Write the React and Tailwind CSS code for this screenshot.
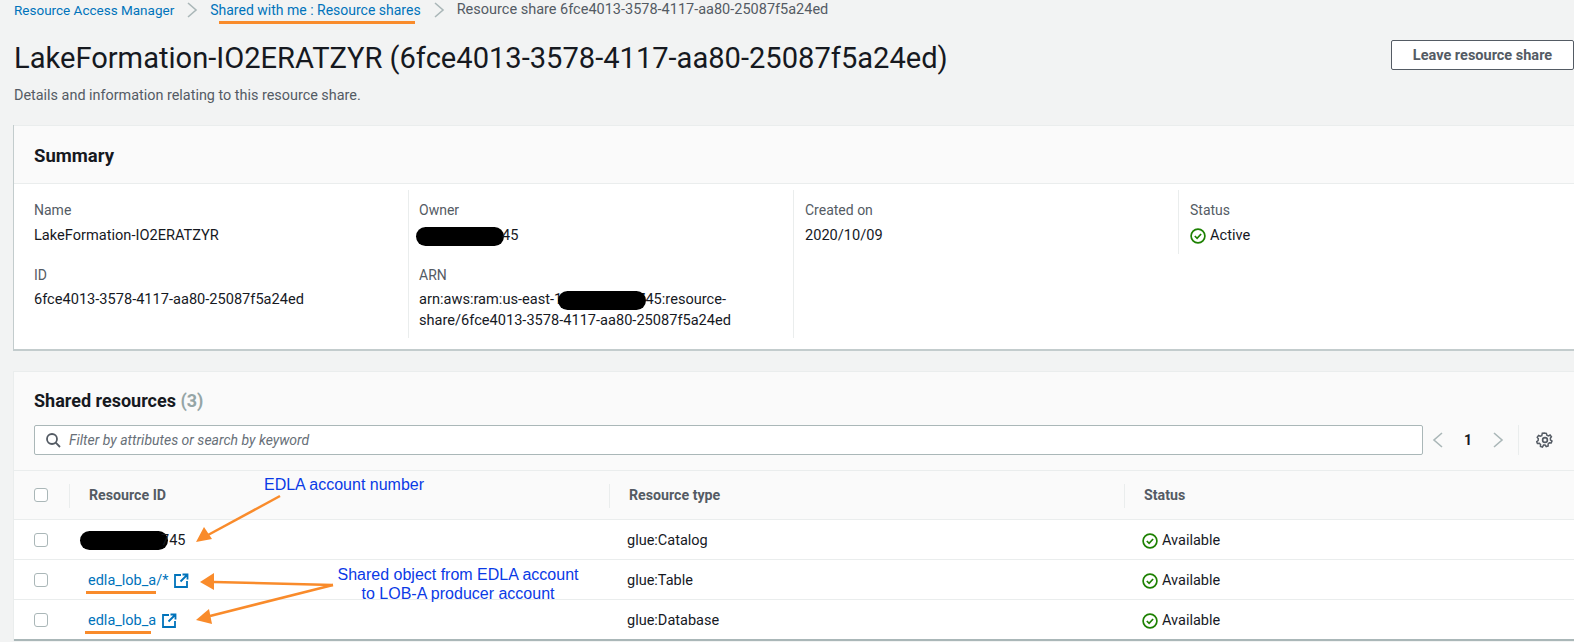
const font = { fontFamily: 'Roboto, "Noto Sans", sans-serif' };

function Chevron({ dir = 'right', className = '' }) {
  return (
    <svg width="12" height="18" viewBox="0 0 12 18" fill="none" stroke="currentColor" strokeWidth="1.6" className={className}>
      <path d={dir === 'right' ? 'M2 2l8 7-8 7' : 'M10 2L2 9l8 7'} />
    </svg>
  );
}

function StatusIcon() {
  return (
    <svg width="16" height="16" viewBox="0 0 16 16" fill="none" stroke="#1d8102" strokeWidth="1.7" className="shrink-0">
      <circle cx="8" cy="8" r="6.9" />
      <path d="M4.8 8l2.3 2.3 4-4.3" />
    </svg>
  );
}

function ExternalIcon() {
  return (
    <svg width="16" height="16" viewBox="0 0 16 16" fill="none" stroke="#0073bb" strokeWidth="1.8" className="shrink-0">
      <path d="M8 2H2v12h12V8M9.500 1.500h5v5M14 2L7.500 8.500" />
    </svg>
  );
}

function Checkbox() {
  return <span className="block h-[14px] w-[14px] rounded-[3px] border border-[#aab7b8] bg-white" />;
}

function Blob({ className = '' }) {
  return <span className={`inline-block h-[19px] w-[88px] rounded-full bg-black align-middle ${className}`} />;
}

function Field({ label, children, className = '', valueClass = 'mt-[5px]' }) {
  return (
    <div className={className}>
      <div className="text-[14px] leading-[20px] text-[#545b64]">{label}</div>
      <div className={`${valueClass} text-[14.6px] leading-[21px] text-[#16191f]`}>{children}</div>
    </div>
  );
}

const rowGrid = 'grid grid-cols-[55px_540px_515px_1fr] items-center';

function Row({ id, type, last }) {
  return (
    <div className={`${rowGrid} ${last ? 'h-[41px] border-b-2 border-[#aab7b8]' : 'h-[40px] border-b border-[#eaeded]'}`}>
      <div className="pl-[20px]"><Checkbox /></div>
      <div className="pt-[2px] pl-[19px] text-[14.5px] text-[#16191f]">{id}</div>
      <div className="pt-[2px] pl-[18px] text-[14.5px] text-[#16191f]">{type}</div>
      <div className="flex items-center gap-[4px] pt-[2px] pl-[18px] text-[14.5px] text-[#16191f]"><StatusIcon />Available</div>
    </div>
  );
}

function Head({ children }) {
  return (
    <div className="mt-[2px] flex h-[24px] items-center border-l border-[#eaeded] pl-[19px] text-[14.2px] font-bold text-[#545b64]">
      {children}
    </div>
  );
}

export default function App() {
  return (
    <div className="relative h-[642px] w-[1574px] overflow-hidden bg-[#f2f3f3]" style={font}>
      <div className="flex h-[20px] items-center pl-[14px] leading-[20px]">
        <span className="text-[13.5px] text-[#0073bb]">Resource Access Manager</span>
        <Chevron className="mx-[12px] text-[#aab7b8]" />
        <span className="text-[14px] text-[#0073bb]">Shared with me : Resource shares</span>
        <Chevron className="mx-[12px] text-[#aab7b8]" />
        <span className="text-[14.5px] text-[#545b64]">Resource share 6fce4013-3578-4117-aa80-25087f5a24ed</span>
      </div>

      <div className="mt-[20px] flex items-start justify-between pl-[14px]">
        <h1 className="text-[29.1px] leading-[36px] font-normal text-[#16191f]">LakeFormation-IO2ERATZYR (6fce4013-3578-4117-aa80-25087f5a24ed)</h1>
        <button className="h-[30px] w-[183px] rounded-[2px] border border-[#545b64] bg-white pt-[2px] text-[14.5px] font-bold text-[#545b64]">Leave resource share</button>
      </div>
      <p className="mt-[10px] pl-[14px] text-[14.4px] leading-[20px] text-[#545b64]">Details and information relating to this resource share.</p>

      <section className="mt-[19px] ml-[13px] w-[1600px] border-b-2 border-l border-[#aab7b8]/70 bg-white">
        <div className="flex h-[59px] items-center border-y border-[#eaeded] bg-[#fafafa] pt-[5px] pl-[20px]">
          <h2 className="text-[18.5px] font-bold text-[#16191f]">Summary</h2>
        </div>
        <div className="grid h-[165px] grid-cols-[394px_385px_385px_1fr] items-start pt-[6px]">
          <div className="h-[148px] pt-[10px] pl-[20px]">
            <Field label="Name">LakeFormation-IO2ERATZYR</Field>
            <Field label="ID" className="mt-[19px]" valueClass="mt-[4px]">6fce4013-3578-4117-aa80-25087f5a24ed</Field>
          </div>
          <div className="h-[148px] border-l border-[#eaeded] pt-[10px] pl-[10px]">
            <Field label="Owner"><Blob className="-mr-[2px] -ml-[3px]" />45</Field>
            <Field label="ARN" className="mt-[19px]" valueClass="mt-[4px]">
              <div className="whitespace-nowrap">arn:aws:ram:us-east-1<Blob className="relative -mr-[9px] -ml-[4px]" />745:resource-</div>
              <div className="whitespace-nowrap">share/6fce4013-3578-4117-aa80-25087f5a24ed</div>
            </Field>
          </div>
          <div className="h-[148px] border-l border-[#eaeded] pt-[10px] pl-[11px]">
            <Field label="Created on">2020/10/09</Field>
          </div>
          <div className="h-[64px] border-l border-[#eaeded] pt-[10px] pl-[11px]">
            <Field label="Status"><span className="flex items-center gap-[4px]"><StatusIcon />Active</span></Field>
          </div>
        </div>
      </section>

      <section className="mt-[20px] ml-[13px] w-[1600px] border-t border-l border-[#eaeded] bg-white">
        <div className="h-[99px] border-b border-[#eaeded] bg-[#fafafa] pt-[16px] pl-[20px]">
          <h2 className="text-[18px] leading-[26px] font-bold text-[#16191f]">Shared resources <span className="text-[#95a5a6]">(3)</span></h2>
          <div className="mt-[11px] flex items-center">
            <div className="flex h-[30px] w-[1389px] items-center gap-[8px] rounded-[2px] border border-[#aab7b8] bg-white pl-[10px]">
              <svg width="16" height="16" viewBox="0 0 16 16" fill="none" stroke="#545b64" strokeWidth="1.8"><circle cx="7" cy="7" r="5" /><path d="M10.700 10.700L15 15" /></svg>
              <span className="text-[14px] text-[#687078] italic">Filter by attributes or search by keyword</span>
            </div>
            <Chevron dir="left" className="ml-[9px] text-[#aab7b8]" />
            <span className="ml-[19px] w-[10px] text-center text-[14px] font-bold text-[#16191f]">1</span>
            <Chevron className="ml-[19px] text-[#aab7b8]" />
            <div className="ml-[14px] h-[30px] border-l border-[#eaeded]" />
            <svg width="18" height="18" viewBox="0 0 24 24" fill="none" stroke="#545b64" strokeWidth="2.200" className="ml-[17px]">
              <circle cx="12" cy="12" r="3.200" />
              <path d="M12 1.800l2 .3.8 2.700 2.200 1 2.500-1.200 2 2.600-1.600 2.200.3 2.600 2.200 1.600-1.200 2.800-2.800-.3-1.800 1.800.1 2.800-2.900 1-1.700-2.200h-2.200L8.200 22.500l-2.900-1 .1-2.800-1.800-1.800-2.800.3-1.200-2.800 2.200-1.600.3-2.600L.5 7.900l2-2.600L5 6.500l2.200-1L8 2.100z" transform="translate(1.200 1.200) scale(.9)" />
            </svg>
          </div>
        </div>
        <div className={`${rowGrid} h-[49px] border-b border-[#eaeded] bg-[#fafafa]`}>
          <div className="pl-[20px]"><Checkbox /></div>
          <Head>Resource ID</Head>
          <Head>Resource type</Head>
          <Head>Status</Head>
        </div>
        <Row id={<span className="-ml-[8px] block"><Blob className="-mr-[7px]" />745</span>} type="glue:Catalog" />
        <Row id={<span className="flex items-center gap-[5px] text-[#0073bb]">edla_lob_a/*<ExternalIcon /></span>} type="glue:Table" />
        <Row last id={<span className="flex items-center gap-[5px] text-[#0073bb]">edla_lob_a<ExternalIcon /></span>} type="glue:Database" />
      </section>

      <span className="absolute top-[21px] left-[219px] h-[3px] w-[196px] bg-[#f98b2b]" />
      <span className="absolute top-[591px] left-[86px] h-[3px] w-[70px] bg-[#f98b2b]" />
      <span className="absolute top-[631px] left-[85px] h-[3px] w-[66px] bg-[#f98b2b]" />

      <svg className="absolute top-0 left-0" width="1574" height="642" fill="none">
        <g stroke="#f98b2b" strokeWidth="2.500">
          <path d="M280 496L208 535" />
          <path d="M333 585L214 582" />
          <path d="M333 585L210 616" />
        </g>
        <g fill="#f98b2b">
          <path d="M196 542l8-15 8 12z" />
          <path d="M200 582l14-9v17z" />
          <path d="M196 620l13-11 3 15z" />
        </g>
      </svg>

      <div className="absolute top-[476px] left-[244px] w-[200px] text-center text-[16px] leading-[18px] text-[#0a3ae6]" style={{ fontFamily: '"Liberation Sans", sans-serif' }}>EDLA account number</div>
      <div className="absolute top-[565px] left-[318px] w-[280px] text-center text-[16px] leading-[19px] text-[#0a3ae6]" style={{ fontFamily: '"Liberation Sans", sans-serif' }}>Shared object from EDLA account<br />to LOB-A producer account</div>
    </div>
  );
}
